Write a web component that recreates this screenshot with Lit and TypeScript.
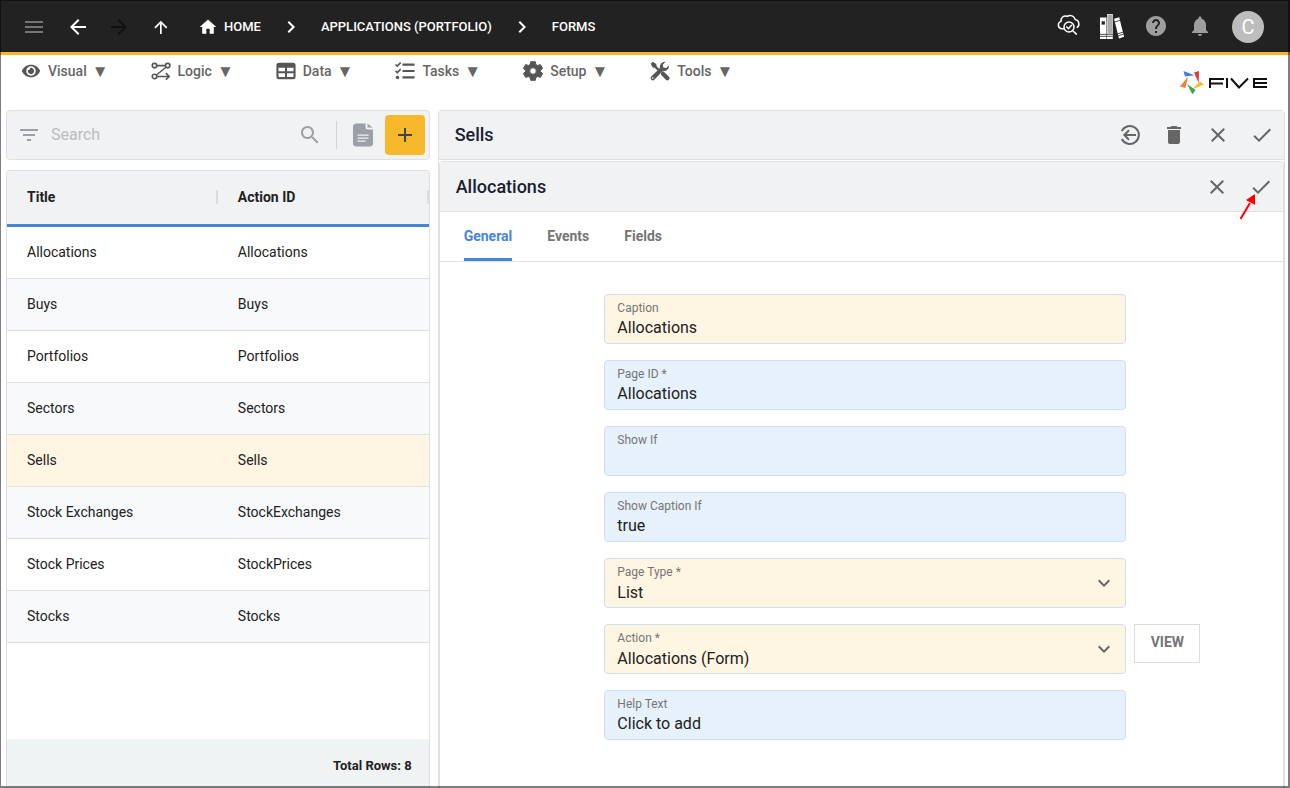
import { LitElement, html, svg, css } from "lit";
import { customElement, property, state } from "lit/decorators.js";
import { classMap } from "lit/directives/class-map.js";

const glyph = (name: string) => {
  switch (name) {
    case "menu":
      return svg`<path d="M3 18h18v-2H3v2zm0-5h18v-2H3v2zm0-7v2h18V6H3z"/>`;
    case "back":
      return svg`<path d="M20 11H7.83l5.59-5.59L12 4l-8 8 8 8 1.41-1.41L7.83 13H20v-2z"/>`;
    case "forward":
      return svg`<path d="M12 4l-1.41 1.41L16.17 11H4v2h12.17l-5.58 5.59L12 20l8-8z"/>`;
    case "up":
      return svg`<path d="M6.300 12.300l1.200 1.200 4.500-4.500V19h1.700V9l4.400 4.500 1.200-1.200-6.500-6.500z"/>`;
    case "home":
      return svg`<path d="M10 20v-6h4v6h5v-8h3L12 3 2 12h3v8z"/>`;
    case "chevron":
      return svg`<path d="M10 6L8.59 7.41 13.17 12l-4.58 4.59L10 18l6-6z"/>`;
    case "down":
      return svg`<path d="M16.59 8.59L12 13.17 7.41 8.59 6 10l6 6 6-6z"/>`;
    case "help":
      return svg`<path d="M12 2C6.48 2 2 6.48 2 12s4.48 10 10 10 10-4.48 10-10S17.52 2 12 2zm1 17h-2v-2h2v2zm2.07-7.75l-.9.92C13.45 12.9 13 13.5 13 15h-2v-.5c0-1.1.45-2.1 1.17-2.83l1.24-1.26c.37-.36.59-.86.59-1.41 0-1.1-.9-2-2-2s-2 .9-2 2H8c0-2.21 1.79-4 4-4s4 1.79 4 4c0 .88-.36 1.68-.93 2.25z"/>`;
    case "bell":
      return svg`<path d="M12 22c1.1 0 2-.9 2-2h-4c0 1.1.89 2 2 2zm6-6v-5c0-3.07-1.64-5.64-4.5-6.32V4c0-.83-.67-1.5-1.5-1.5s-1.5.67-1.5 1.5v.68C7.63 5.36 6 7.92 6 11v5l-2 2v1h16v-1l-2-2z"/>`;
    case "cloud":
      return svg`<g fill="none" stroke="currentColor" stroke-width="1.5" stroke-linecap="round"><path d="M7.400 14.800H5.800a3.800 3.800 0 0 1-.8-7.400 4.600 4.600 0 0 1 6.300-5.100 5.200 5.200 0 0 1 7.900 3.300 4.400 4.400 0 0 1 2 7.800"/><circle cx="13" cy="13" r="5"/><path d="M10.800 12.900l1.700 1.800 3-3.400M16.800 16.700l3.600 3.400"/></g>`;
    case "books":
      return svg`<path d="M0 3.500h6.500V25H0zM7 0h5.800v25H7zM14 4.700l5.200-1.500 4.900 19.600-5.100 1.600z"/><path d="M7.400.500h5v19h-5z" fill="#aaa"/><path d="M1.600 7.300h3.300v3.300H1.600z" fill="#222"/><path d="M0 20.300h12.800M0 22.300h12.800M14.800 7.900l5.200-1.500M17.900 19.700l5.200-1.500M18.400 21.700l5.200-1.500" stroke="#222" stroke-width=".8"/>`;
    case "eye":
      return svg`<path d="M12 4.500C7 4.500 2.730 7.610 1 12c1.730 4.390 6 7.500 11 7.500s9.270-3.110 11-7.500c-1.730-4.390-6-7.500-11-7.500z"/><circle cx="12" cy="12" r="5.700" fill="#fff"/><path d="M12 8.200a3.800 3.800 0 1 1-3.600 2.600 2 2 0 0 0 2.400-2.400A3.800 3.800 0 0 1 12 8.200z"/>`;
    case "logic":
      return svg`<g fill="none" stroke="currentColor" stroke-width="1.9"><circle cx="4.200" cy="5.500" r="2.700"/><circle cx="20" cy="5.500" r="2.700"/><circle cx="4.200" cy="18.500" r="2.700"/><path d="M7 5.500h10.300M18 7.500L6.500 16.800M7 18.500h14.500M17.800 14.500l4 4-4 4"/></g>`;
    case "table":
      return svg`<path fill-rule="evenodd" d="M3.500 2h17A3 3 0 0 1 23.500 5v14a3 3 0 0 1-3 3h-17a3 3 0 0 1-3-3V5a3 3 0 0 1 3-3zM3 8v4.200h7.800V8zm10.200 0v4.200H21V8zM3 14.700V19.200h7.800v-4.500zm10.200 0v4.500H21v-4.500z"/>`;
    case "tasks":
      return svg`<path d="M9 3h14.500v2.600H9zM9 10.700h14.500v2.600H9zM9 18.400h14.500V21H9z"/><circle cx="3" cy="19.700" r="2.100"/><path fill="none" stroke="currentColor" stroke-width="1.900" d="M.7 4.200l2 2L6.800 2M.7 11.900l2 2 4.100-4.200"/>`;
    case "gear":
      return svg`<path stroke="currentColor" stroke-width="1.200" stroke-linejoin="round" fill-rule="evenodd" d="M9.300.800h5.400l.7 3.300 2.200 1.300 3.200-1.100 2.700 4.700-2.500 2.200v1.600l2.500 2.200-2.700 4.700-3.200-1.100-2.200 1.300-.7 3.300H9.300l-.7-3.300-2.200-1.300-3.200 1.100L.500 15l2.500-2.200v-1.600L.500 9l2.700-4.700 3.200 1.100 2.200-1.300zM12 8a4 4 0 1 0 0 8 4 4 0 0 0 0-8z"/>`;
    case "tools":
      return svg`<path d="M.8 3.200L3.200.8l4.300 2.900.5 2.700 5 5-2 2-5-5-2.700-.5zM13.800 12.800l2.300-.6 6.600 6.700a2.400 2.400 0 0 1-3.700 3.700l-6-6.500z"/><path fill-rule="evenodd" d="M22.900 5.300a6 6 0 0 1-7.400 6.400L5.200 22.400a2.600 2.600 0 0 1-3.700-3.700L12 8.500A6 6 0 0 1 18.600 1l-3.200 3.400.6 3.300 3.500.7zM3.300 19.500a1 1 0 1 0 0 2 1 1 0 0 0 0-2z"/>`;
    case "filter":
      return svg`<path d="M10 18h4v-2h-4v2zM3 6v2h18V6H3zm3 7h12v-2H6v2z"/>`;
    case "search":
      return svg`<path d="M15.500 14h-.79l-.28-.27C15.410 12.590 16 11.110 16 9.500 16 5.910 13.090 3 9.500 3S3 5.910 3 9.500 5.910 16 9.500 16c1.610 0 3.090-.59 4.230-1.570l.27.28v.79l5 4.990L20.490 19l-4.990-5zm-6 0C7.010 14 5 11.990 5 9.500S7.010 5 9.500 5 14 7.010 14 9.500 11.990 14 9.500 14z"/>`;
    case "document":
      return svg`<path fill-rule="evenodd" d="M4.500.500H14.500v3.500A2.500 2.500 0 0 0 17 6.500h5V20.500a3 3 0 0 1-3 3H5a3 3 0 0 1-3-3V3.500a3 3 0 0 1 2.500-3zM6.500 11.500v1.300h11v-1.300zm0 3v1.300h11v-1.300zm0 3v1.300h8v-1.300z"/><path d="M16.500.500v4h5z"/>`;
    case "plus":
      return svg`<path d="M19 13h-6v6h-2v-6H5v-2h6V5h2v6h6v2z"/>`;
    case "exit":
      return svg`<g fill="none" stroke="currentColor" stroke-width="2"><path d="M3.800 8A9 9 0 1 1 3.800 16"/><path d="M18 12H6.500M11 7.300L6.300 12l4.700 4.700"/></g>`;
    case "trash":
      return svg`<path d="M6 19c0 1.100.9 2 2 2h8c1.100 0 2-.9 2-2V7H6v12zM19 4h-3.500l-1-1h-5l-1 1H5v2h14V4z"/>`;
    case "close":
      return svg`<path d="M19 6.410L17.590 5 12 10.590 6.410 5 5 6.410 10.590 12 5 17.590 6.410 19 12 13.410 17.590 19 19 17.590 13.410 12z"/>`;
    case "check":
      return svg`<path d="M9 16.170L4.830 12l-1.420 1.410L9 19 21 7l-1.410-1.410z"/>`;
    default:
      return svg``;
  }
};

@customElement("ui-icon")
export class UiIcon extends LitElement {
  @property() name = "";
  @property({ type: Number }) size = 24;

  static styles = css`
    :host {
      display: inline-flex;
      flex: none;
    }
    .icon {
      display: block;
      fill: currentColor;
      overflow: visible;
    }
  `;

  render() {
    return html`<svg class="icon" width=${this.size} height=${this.size} viewBox="0 0 24 24" aria-hidden="true">
      ${glyph(this.name)}
    </svg>`;
  }
}

interface Row {
  title: string;
  action: string;
}

interface Field {
  id: string;
  label: string;
  value: string;
  warm?: boolean;
  select?: boolean;
  view?: boolean;
}

@customElement("app-root")
export class AppRoot extends LitElement {
  @state() private selected = "Sells";
  @state() private tab = "General";

  private menus = [
    ["eye", "Visual"],
    ["logic", "Logic"],
    ["table", "Data"],
    ["tasks", "Tasks"],
    ["gear", "Setup"],
    ["tools", "Tools"],
  ];

  private rows: Row[] = [
    { title: "Allocations", action: "Allocations" },
    { title: "Buys", action: "Buys" },
    { title: "Portfolios", action: "Portfolios" },
    { title: "Sectors", action: "Sectors" },
    { title: "Sells", action: "Sells" },
    { title: "Stock Exchanges", action: "StockExchanges" },
    { title: "Stock Prices", action: "StockPrices" },
    { title: "Stocks", action: "Stocks" },
  ];

  private fields: Field[] = [
    { id: "caption", label: "Caption", value: "Allocations", warm: true },
    { id: "page-id", label: "Page ID *", value: "Allocations" },
    { id: "show-if", label: "Show If", value: "" },
    { id: "show-caption-if", label: "Show Caption If", value: "true" },
    { id: "page-type", label: "Page Type *", value: "List", warm: true, select: true },
    { id: "action", label: "Action *", value: "Allocations (Form)", warm: true, select: true, view: true },
    { id: "help-text", label: "Help Text", value: "Click to add" },
  ];

  static styles = css`
    :host {
      display: flex;
      flex-direction: column;
      height: 100vh;
      overflow: hidden;
      background: #fff;
      color: #212121;
      font: 14px/20px Roboto, "Liberation Sans", sans-serif;
    }
    :host::after {
      content: "";
      position: fixed;
      inset: 0;
      border: solid rgba(0, 0, 0, 0.5);
      border-width: 1px 2px 2px 1px;
      pointer-events: none;
    }
    *,
    *::before,
    *::after {
      box-sizing: border-box;
    }
    button,
    input,
    select {
      margin: 0;
      padding: 0;
      border: 0;
      background: none;
      color: inherit;
      font: inherit;
    }
    button {
      display: inline-flex;
      align-items: center;
      justify-content: center;
      cursor: pointer;
    }
    a {
      display: inline-flex;
      align-items: center;
      gap: 6px;
      color: inherit;
      text-decoration: none;
    }

    .topbar {
      display: flex;
      align-items: center;
      justify-content: space-between;
      flex: none;
      height: 55px;
      padding: 0 26px 0 22px;
      background: #222;
      border-bottom: 3px solid #f8b62b;
      color: #fff;
    }
    .nav,
    .crumbs,
    .tools {
      display: flex;
      align-items: center;
    }
    .nav {
      padding-top: 2px;
    }
    .nav-button {
      width: 24px;
    }
    .nav-buttons {
      display: flex;
      gap: 17px;
    }
    .menu-button {
      color: #757575;
      margin-right: 3px;
    }
    .disabled {
      color: #111;
    }
    .crumbs {
      margin-left: 26px;
      gap: 18px;
      font-size: 13px;
      font-weight: 500;
    }
    .tools {
      gap: 20px;
      color: #9e9e9e;
    }
    .light {
      color: #fff;
    }
    .avatar {
      width: 32px;
      height: 32px;
      margin-top: 2px;
      border-radius: 50%;
      background: #bdbdbd;
      color: #fff;
      font-size: 20px;
    }

    .menubar {
      display: flex;
      justify-content: space-between;
      flex: none;
      height: 55px;
      padding: 6px 22px 0 21px;
    }
    .menus {
      display: flex;
      align-items: flex-start;
      gap: 42px;
    }
    .menu {
      gap: 7px;
      color: #666;
      font-weight: 500;
    }
    .menu-icon {
      color: #555;
    }
    .menu-caret {
      margin-left: -2px;
      font-size: 17px;
      line-height: 20px;
    }
    .logo {
      margin-top: 9px;
    }

    .workspace {
      display: grid;
      grid-template-columns: minmax(0, 1fr) minmax(0, 2fr);
      gap: 8px;
      flex: 1;
      min-height: 0;
      padding: 0 5px 0 6px;
    }
    .left {
      display: flex;
      flex-direction: column;
      gap: 10px;
      min-height: 0;
    }
    .searchbar {
      display: flex;
      align-items: center;
      flex: none;
      height: 50px;
      padding: 0 4px 0 10px;
      background: #f1f2f4;
      border: 1px solid #e0e0e0;
      border-radius: 4px;
      color: #9aa0a6;
    }
    .search-input {
      flex: 1;
      min-width: 0;
      height: 32px;
      padding: 0 0 2px 10px;
      color: #212121;
      font-size: 16px;
      outline: 0;
    }
    .search-input::placeholder {
      color: #b9bcbf;
      opacity: 1;
    }
    .search-end {
      display: flex;
      align-items: center;
      align-self: stretch;
      gap: 10px;
    }
    .rule {
      width: 1px;
      height: 28px;
      margin: 0 4px;
      background: #d0d3d6;
    }
    .add {
      width: 40px;
      height: 40px;
      border-radius: 4px;
      background: #f8b82c;
      color: #444;
    }

    .listing {
      display: flex;
      flex-direction: column;
      flex: 1;
      min-height: 0;
      border: 1px solid #e0e0e0;
      border-bottom: 0;
      border-radius: 4px 4px 0 0;
      overflow: hidden;
    }
    .table-area {
      flex: 1;
      min-height: 0;
      overflow: hidden;
    }
    .table {
      width: 100%;
      table-layout: fixed;
      border-collapse: separate;
      border-spacing: 0;
    }
    .head {
      height: 56px;
      padding: 0 0 2px 20px;
      background: #f1f2f4;
      border-bottom: 3px solid #4686da;
      font-weight: 700;
      text-align: left;
    }
    .head-label {
      display: flex;
      align-items: center;
      justify-content: space-between;
    }
    .head-label::after {
      content: "";
      width: 2px;
      height: 14px;
      background: #dcdcdc;
    }
    .cell {
      height: 52px;
      padding: 0 20px 2px;
      border-bottom: 1px solid #e0e0e0;
    }
    .row {
      cursor: pointer;
    }
    .row:nth-child(even) {
      background: #f8f9fb;
    }
    .row.selected {
      background: #fff5e3;
    }
    .footer {
      flex: none;
      height: 49px;
      padding: 17px 17px 0;
      background: #eff3f4;
      font-size: 13px;
      font-weight: 700;
      text-align: right;
    }

    .card {
      display: flex;
      flex-direction: column;
      min-height: 0;
      border: 1px solid #e0e0e0;
      border-bottom: 0;
      border-radius: 4px 4px 0 0;
    }
    .inner {
      flex: 1;
      margin-top: 1px;
    }
    .card-head {
      display: flex;
      align-items: center;
      justify-content: space-between;
      flex: none;
      height: 49px;
      padding: 0 10px 0 16px;
      background: #f1f2f4;
      border-bottom: 1px solid #e0e0e0;
    }
    .inner-head {
      height: 50px;
    }
    .heading {
      margin: 0;
      color: #1a2030;
      font-size: 18px;
      font-weight: 500;
      line-height: 24px;
    }
    .actions {
      position: relative;
      display: flex;
      gap: 20px;
      color: #666;
    }
    .pointer {
      position: absolute;
      top: 19px;
      right: 16px;
    }
    .tabs {
      display: flex;
      flex: none;
      gap: 35px;
      height: 50px;
      padding: 0 24px;
      border-bottom: 1px solid #e0e0e0;
    }
    .tab {
      padding-top: 2px;
      border-bottom: 3px solid transparent;
      border-radius: 2px 2px 0 0;
      color: #757575;
      font-weight: 700;
    }
    .tab.active {
      border-color: #4686da;
      color: #4686da;
    }
    .form {
      display: grid;
      gap: 16px;
      padding: 32px 0 0 8px;
    }
    .line {
      display: grid;
      grid-template-columns: 1fr minmax(0, 522px) 1fr;
      column-gap: 8px;
    }
    .field {
      display: grid;
      grid-column: 2;
      grid-template-columns: 1fr 24px;
      grid-template-rows: 16px 24px;
      height: 50px;
      padding: 5px 9px 3px 12px;
      border: 1px solid #cddff0;
      border-radius: 4px;
      background: #e7f1fc;
    }
    .field.warm {
      background: #fff5e3;
    }
    .label {
      grid-area: 1 / 1;
      color: #757575;
      font-size: 12px;
      line-height: 16px;
    }
    .control {
      grid-area: 2 / 1 / 3 / 3;
      width: 100%;
      font-size: 16px;
      line-height: 24px;
      appearance: none;
      outline: 0;
    }
    select.control {
      padding-top: 1px;
    }
    .caret {
      grid-area: 1 / 2 / 3 / 3;
      align-self: center;
      padding-bottom: 2px;
      color: #666;
      pointer-events: none;
    }
    .view {
      grid-column: 3;
      justify-self: start;
      width: 66px;
      height: 39px;
      padding-bottom: 3px;
      border: 1px solid #dcdcdc;
      color: #757575;
      font-weight: 700;
    }
  `;

  private renderField(f: Field) {
    return html`<div class="line">
      <div class=${classMap({ field: true, warm: !!f.warm })}>
        <label class="label" for=${f.id}>${f.label}</label>
        ${f.select
          ? html`<select class="control" id=${f.id}>
                <option selected>${f.value}</option>
              </select>
              <ui-icon class="caret" name="down"></ui-icon>`
          : html`<input class="control" id=${f.id} type="text" .value=${f.value} />`}
      </div>
      ${f.view ? html`<button class="view" type="button">VIEW</button>` : ""}
    </div>`;
  }

  render() {
    return html`
      <header class="topbar">
        <nav class="nav" aria-label="Breadcrumb">
          <div class="nav-buttons">
            <button class="nav-button menu-button" aria-label="Menu"><ui-icon name="menu"></ui-icon></button>
            <button class="nav-button" aria-label="Back"><ui-icon name="back"></ui-icon></button>
            <button class="nav-button disabled" aria-label="Forward" disabled><ui-icon name="forward"></ui-icon></button>
            <button class="nav-button" aria-label="Up"><ui-icon name="up"></ui-icon></button>
          </div>
          <div class="crumbs">
            <a href="#home"><ui-icon name="home" size="20"></ui-icon>HOME</a>
            <ui-icon name="chevron"></ui-icon>
            <a href="#applications">APPLICATIONS (PORTFOLIO)</a>
            <ui-icon name="chevron"></ui-icon>
            <a href="#forms">FORMS</a>
          </div>
        </nav>
        <div class="tools">
          <button class="light" aria-label="Inspect"><ui-icon name="cloud"></ui-icon></button>
          <button class="light" aria-label="Library"><ui-icon name="books"></ui-icon></button>
          <button aria-label="Help"><ui-icon name="help"></ui-icon></button>
          <button aria-label="Notifications"><ui-icon name="bell"></ui-icon></button>
          <button class="avatar" aria-label="Account">C</button>
        </div>
      </header>

      <div class="menubar">
        <nav class="menus" aria-label="Main">
          ${this.menus.map(
            ([icon, label]) => html`<button class="menu">
              <ui-icon class="menu-icon" name=${icon} size="20"></ui-icon><span>${label}</span
              ><span class="menu-caret">▼</span>
            </button>`
          )}
        </nav>
        <svg class="logo" width="88" height="24" viewBox="0 0 88 24" role="img" aria-label="Five">
          <path fill="#3f7fdc" d="M3.500 1l11 4.300L5 6.500z" />
          <path fill="#e53935" d="M14 2.500L19 1l-.3 12z" />
          <path fill="#f9b82c" d="M20 11.500l4 3L12 19.500z" />
          <path fill="#34a853" d="M7 14l8.500 6-3 4.500z" />
          <path fill="#f58232" d="M8 6.500L5.500 18 0 16.500z" />
          <g fill="none" stroke="#111" stroke-width="2">
            <path d="M30 18V9h14M30 13.500h13M47 8v10M51 8.500l8 9 9-9M87 9H74v8h13M74 13h13" />
          </g>
        </svg>
      </div>

      <main class="workspace">
        <section class="left">
          <div class="searchbar">
            <ui-icon name="filter"></ui-icon>
            <input class="search-input" type="search" placeholder="Search" aria-label="Search" />
            <div class="search-end">
              <button aria-label="Search"><ui-icon name="search"></ui-icon></button>
              <span class="rule"></span>
              <button aria-label="Document"><ui-icon name="document"></ui-icon></button>
              <button class="add" aria-label="Add"><ui-icon name="plus"></ui-icon></button>
            </div>
          </div>
          <div class="listing">
            <div class="table-area">
              <table class="table">
                <thead>
                  <tr>
                    <th class="head"><div class="head-label">Title</div></th>
                    <th class="head"><div class="head-label">Action ID</div></th>
                  </tr>
                </thead>
                <tbody>
                  ${this.rows.map(
                    (r) => html`<tr
                      class=${classMap({ row: true, selected: r.title === this.selected })}
                      @click=${() => (this.selected = r.title)}
                    >
                      <td class="cell">${r.title}</td>
                      <td class="cell">${r.action}</td>
                    </tr>`
                  )}
                </tbody>
              </table>
            </div>
            <div class="footer">Total Rows: ${this.rows.length}</div>
          </div>
        </section>

        <section class="card">
          <div class="card-head">
            <h1 class="heading">Sells</h1>
            <div class="actions">
              <button aria-label="Return"><ui-icon name="exit"></ui-icon></button>
              <button aria-label="Delete"><ui-icon name="trash"></ui-icon></button>
              <button aria-label="Cancel"><ui-icon name="close"></ui-icon></button>
              <button aria-label="Save"><ui-icon name="check"></ui-icon></button>
            </div>
          </div>
          <section class="card inner">
            <div class="card-head inner-head">
              <h2 class="heading">Allocations</h2>
              <div class="actions">
                <button aria-label="Cancel"><ui-icon name="close"></ui-icon></button>
                <button aria-label="Save"><ui-icon name="check"></ui-icon></button>
                <svg class="pointer" width="18" height="26" viewBox="0 0 18 26" aria-hidden="true">
                  <path d="M1.500 25L11 9" stroke="#f00" stroke-width="2" />
                  <path d="M16 0v11L7 6z" fill="#f00" />
                </svg>
              </div>
            </div>
            <div class="tabs" role="tablist">
              ${["General", "Events", "Fields"].map(
                (t) => html`<button
                  class=${classMap({ tab: true, active: t === this.tab })}
                  role="tab"
                  aria-selected=${t === this.tab}
                  @click=${() => (this.tab = t)}
                >
                  ${t}
                </button>`
              )}
            </div>
            <form class="form">${this.fields.map((f) => this.renderField(f))}</form>
          </section>
        </section>
      </main>
    `;
  }
}
